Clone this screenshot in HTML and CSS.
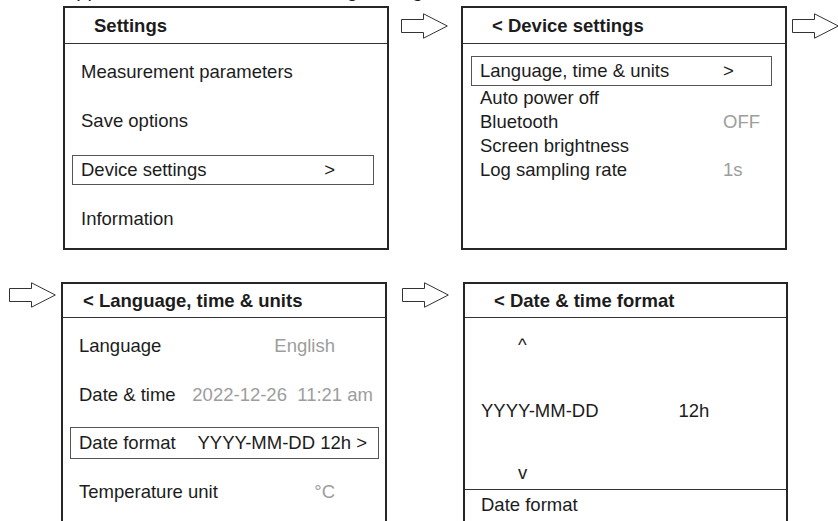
FILE: index.html
```html
<!DOCTYPE html>
<html lang="en">
<head>
    <meta charset="UTF-8">
    <meta name="viewport" content="width=device-width, initial-scale=1.0">
    <title>Device settings menu</title>
    <link rel="stylesheet" href="styles.css">
</head>
<body>

    <!-- caption line, cut off by the top of the page -->
    <div class="caption"><p>App then select the menu Settings and go to Device</p></div>

    <!-- first row: Settings -> Device settings -> -->
    <div class="flow flow-top">
        <div class="screen">
            <div class="screen-head">Settings</div>
            <div class="menu menu-main">
                <div class="item">Measurement parameters</div>
                <div class="item">Save options</div>
                <div class="item selected">Device settings <span>&gt;</span></div>
                <div class="item">Information</div>
            </div>
        </div>

        <svg class="arrow" viewBox="0 0 47 26"><polygon points="0.5,6.5 22.5,6.5 22.5,0.8 46.3,13 22.5,25.2 22.5,19.5 0.5,19.5"/></svg>

        <div class="screen">
            <div class="screen-head">&lt; Device settings</div>
            <div class="menu menu-dev">
                <div class="item selected">Language, time &amp; units <span class="val">&gt;</span></div>
                <div class="item">Auto power off</div>
                <div class="item">Bluetooth <span class="val dim">OFF</span></div>
                <div class="item">Screen brightness</div>
                <div class="item">Log sampling rate <span class="val dim">1s</span></div>
            </div>
        </div>

        <svg class="arrow arrow-end" viewBox="0 0 47 26"><polygon points="0.5,6.5 22.5,6.5 22.5,0.8 46.3,13 22.5,25.2 22.5,19.5 0.5,19.5"/></svg>
    </div>

    <!-- second row: -> Language, time & units -> Date & time format -->
    <div class="flow flow-bottom">
        <svg class="arrow arrow-start" viewBox="0 0 47 26"><polygon points="0.5,6.5 22.5,6.5 22.5,0.8 46.3,13 22.5,25.2 22.5,19.5 0.5,19.5"/></svg>

        <div class="screen screen-lang">
            <div class="screen-head">&lt; Language, time &amp; units</div>
            <div class="menu menu-lang">
                <div class="item">Language <span class="dim">English</span></div>
                <div class="item wide">Date &amp; time <span class="dim">2022-12-26&nbsp;&nbsp;11:21 am</span></div>
                <div class="item selected">Date format <span>YYYY-MM-DD 12h &gt;</span></div>
                <div class="item">Temperature unit <span class="dim">&deg;C</span></div>
            </div>
        </div>

        <svg class="arrow" viewBox="0 0 47 26"><polygon points="0.5,6.5 22.5,6.5 22.5,0.8 46.3,13 22.5,25.2 22.5,19.5 0.5,19.5"/></svg>

        <div class="screen screen-fmt">
            <div class="screen-head">&lt; Date &amp; time format</div>
            <div class="picker">
                <div class="caret">^</div>
                <div class="pick-row">
                    <span>YYYY-MM-DD</span>
                    <span>12h</span>
                </div>
                <div class="caret caret-down">v</div>
            </div>
            <div class="picker-foot">Date format</div>
        </div>
    </div>

</body>
</html>
```

FILE: styles.css
```css
html, body {
    overflow: hidden;
}

body {
    margin: 0;
    width: 838px;
    height: 521px;
    background-color: white;
    color: #1c1c1c;
    font-family: "Liberation Sans", Arial, sans-serif;
    font-size: 18.5px;
}

/* 顶部被截断的说明文字 */
.caption {
    height: 6px;
    overflow: hidden;
}
.caption p {
    margin: -20px 0 0 63px;
    font-size: 20px;
    line-height: 20px;
    white-space: nowrap;
}

/* 一行屏幕 + 箭头 */
.flow {
    display: flex;
    align-items: flex-start;
}
.flow-top {
    padding-left: 63px;
}
.flow-bottom {
    margin-top: 32px;
    padding-left: 9px;
}

.arrow {
    flex: none;
    width: 47px;
    height: 26px;
    margin: 7px 13px 0 12px;
}
.arrow polygon {
    fill: white;
    stroke: #333;
    stroke-width: 1;
}
.arrow-end {
    margin-left: 5px;
    margin-right: 0;
}
.flow-bottom .arrow {
    margin: 0 14px 0 15px;
}
.flow-bottom .arrow-start {
    margin: 0 5px 0 0;
}

/* 屏幕外框 */
.screen {
    flex: none;
    width: 326px;
    height: 244px;
    box-sizing: border-box;
    border: 2px solid #262626;
}
.flow-bottom .screen {
    height: 260px;
}
.screen-fmt {
    width: 325px;
}

.screen-head {
    height: 35px;
    line-height: 35px;
    padding-left: 29px;
    border-bottom: 1px solid #333;
    font-weight: bold;
    white-space: nowrap;
}
.flow-bottom .screen-head {
    height: 33px;
    line-height: 33px;
}
.screen-lang .screen-head {
    padding-left: 20px;
}

/* 菜单项 */
.item {
    display: flex;
    align-items: center;
    justify-content: space-between;
    box-sizing: border-box;
    padding-left: 8px;
    border: 1px solid transparent;
    white-space: nowrap;
}
.item.selected {
    border-color: #555;
}
.dim {
    color: #9d9d9d;
}

.menu-main {
    padding-top: 13px;
}
.menu-main .item {
    height: 30px;
    margin: 0 13px 19px 7px;
    padding-right: 38px;
}

.menu-dev {
    padding-top: 12px;
}
.menu-dev .item {
    height: 24px;
    margin: 0 13px 0 8px;
    padding-right: 4px;
}
.menu-dev .item.selected {
    height: 30px;
}
.menu-dev .val {
    width: 44px;
}

.menu-lang {
    padding-top: 12px;
}
.menu-lang .item {
    height: 32px;
    margin: 0 6px 16.5px 7px;
    padding-right: 43px;
}
.menu-lang .item.wide {
    padding-right: 5px;
}
.menu-lang .item.selected {
    padding-right: 11px;
}

/* 日期格式选择器 */
.picker {
    height: 172px;
    box-sizing: border-box;
    padding: 15px 0 0 16px;
    border-bottom: 1px solid #333;
}
.caret {
    line-height: 24px;
    padding-left: 37px;
}
.pick-row {
    display: flex;
    gap: 80px;
    margin-top: 42px;
    line-height: 24px;
}
.caret-down {
    margin-top: 38px;
}
.picker-foot {
    line-height: 30px;
    padding-left: 16px;
}
```
